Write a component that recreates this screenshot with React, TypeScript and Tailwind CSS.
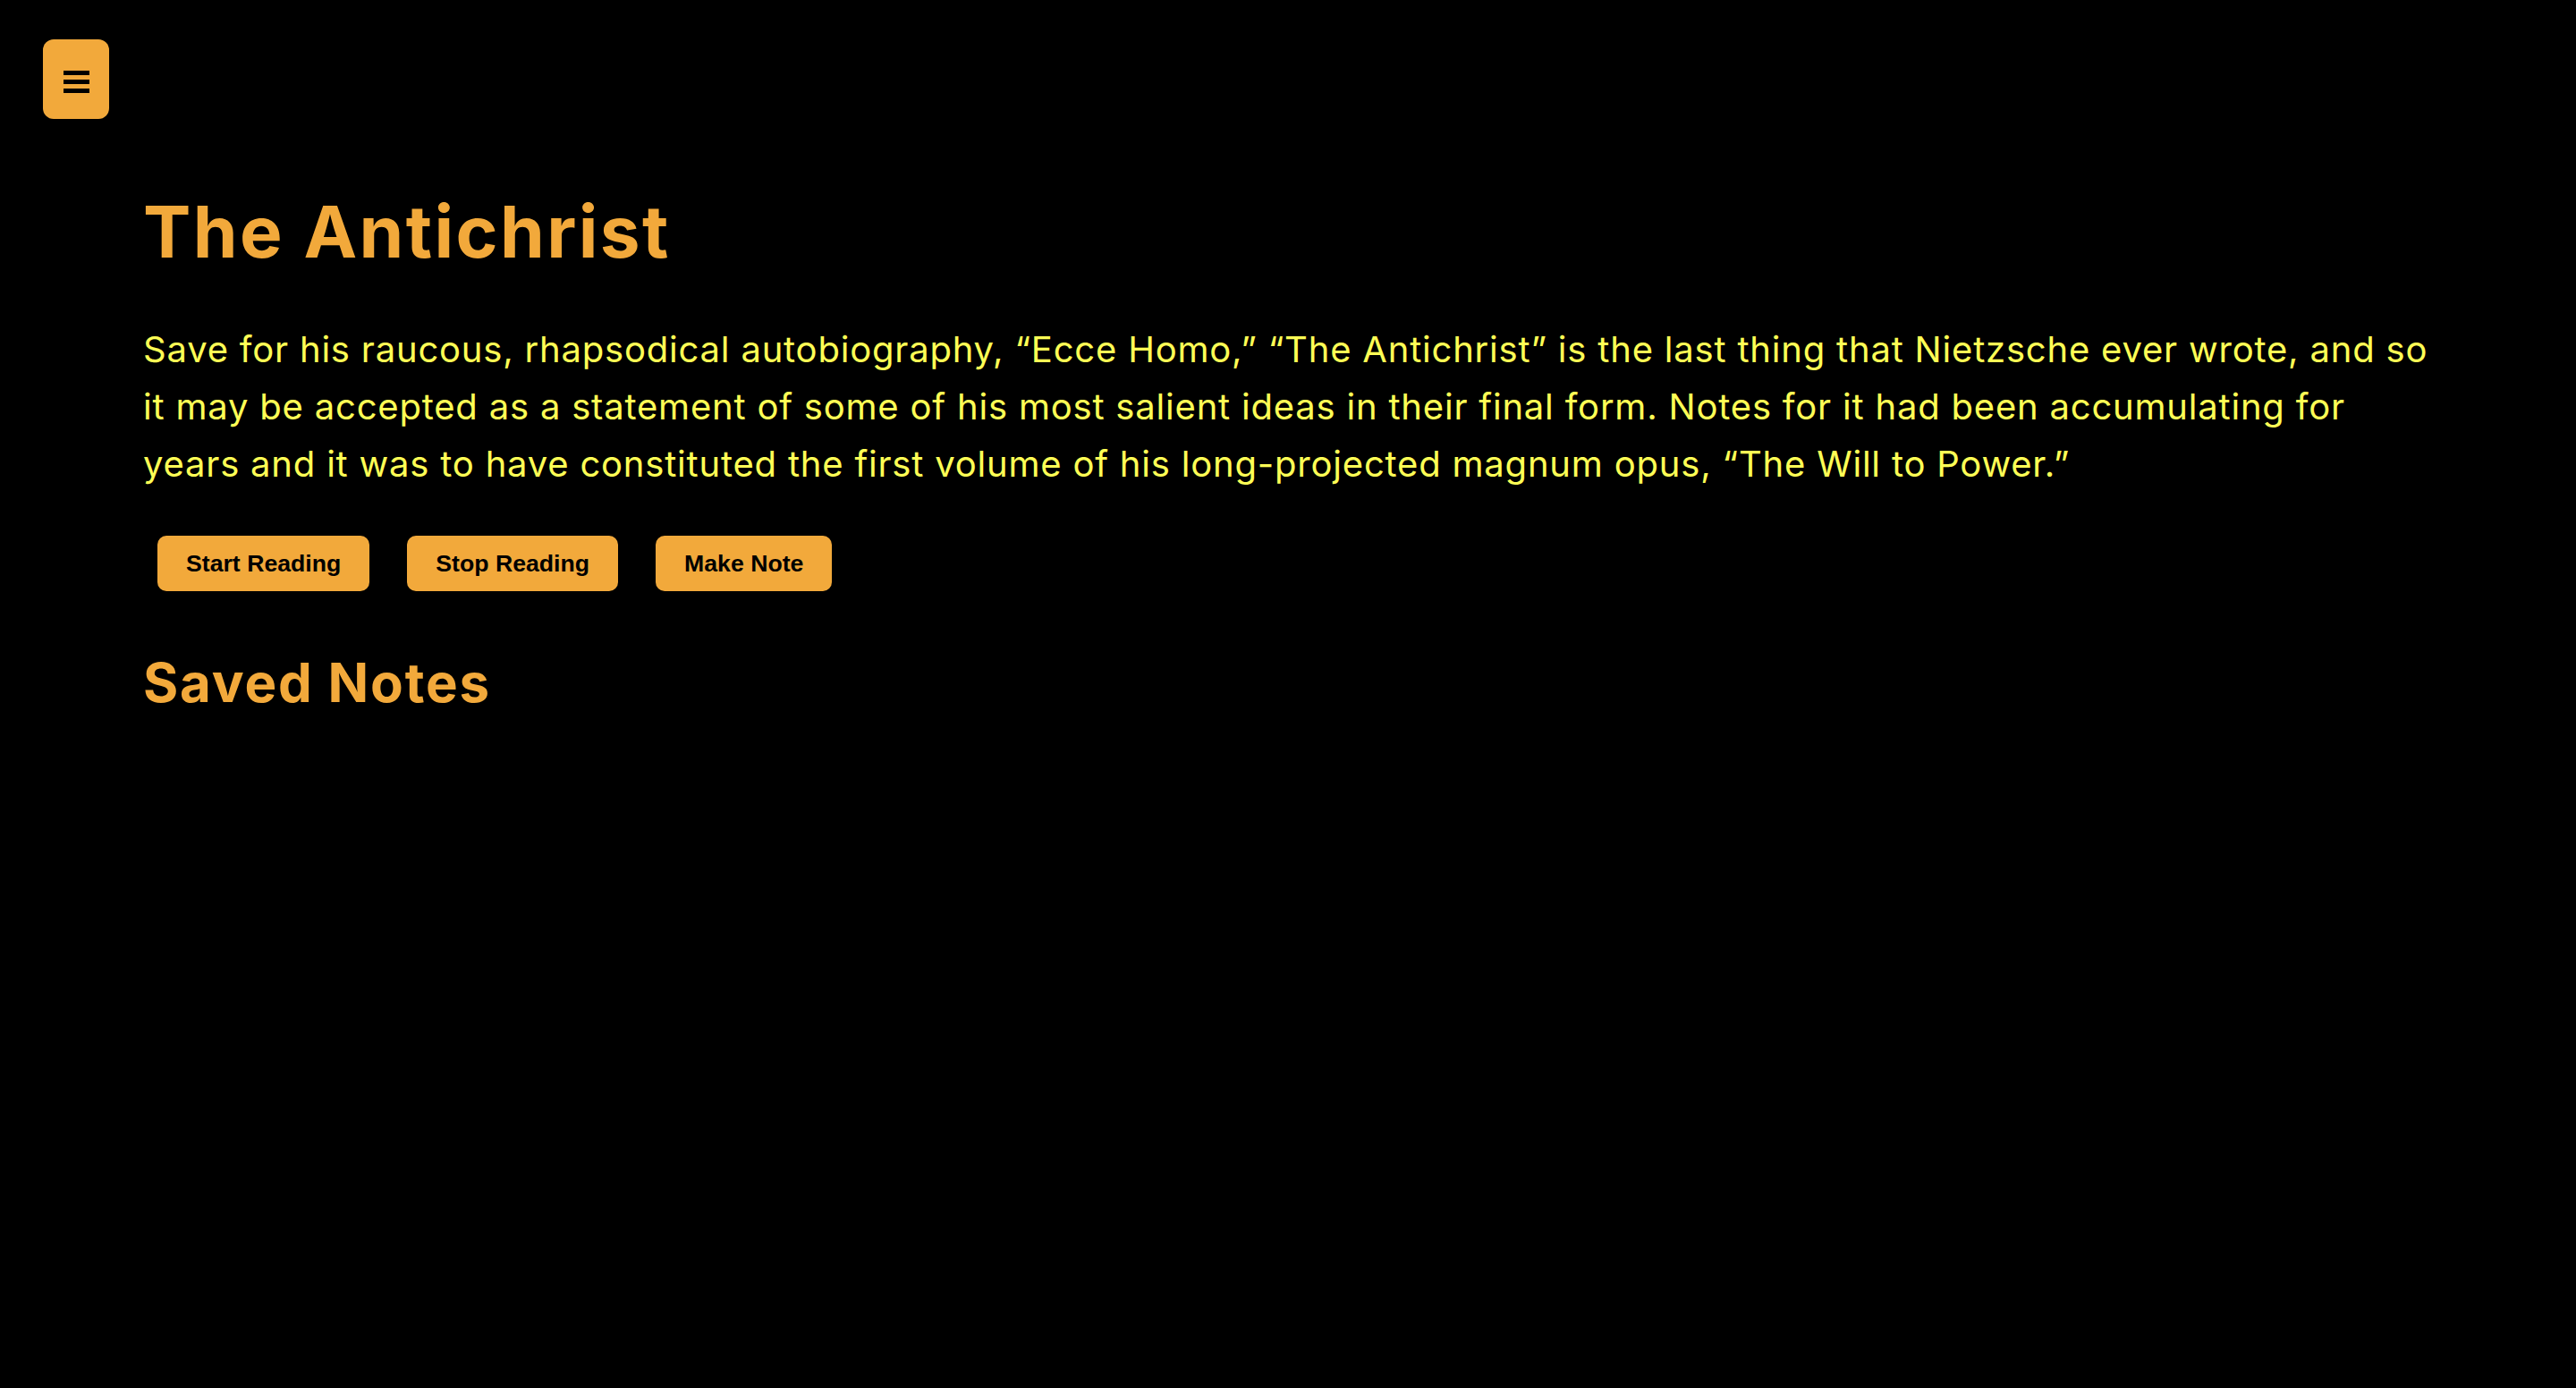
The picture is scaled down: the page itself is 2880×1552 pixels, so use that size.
const paragraph =
  "Save for his raucous, rhapsodical autobiography, “Ecce Homo,” “The Antichrist” is the last thing that Nietzsche ever wrote, and so it may be accepted as a statement of some of his most salient ideas in their final form. Notes for it had been accumulating for years and it was to have constituted the first volume of his long-projected magnum opus, “The Will to Power.”";

const actions = ["Start Reading", "Stop Reading", "Make Note"];

function MenuIcon() {
  return (
    <svg width="29" height="25" viewBox="0 0 29 25" fill="#000">
      <rect x="0" y="0" width="29" height="5" />
      <rect x="0" y="10" width="29" height="5" />
      <rect x="0" y="20" width="29" height="5" />
    </svg>
  );
}

export default function App() {
  return (
    <div className="flow-root min-h-screen bg-black pt-[44px] font-['Inter',sans-serif]">
      <button className="ml-[48px] flex h-[89px] w-[74px] items-center justify-center rounded-[12px] bg-[#f2a93b] pt-[6px]">
        <MenuIcon />
      </button>

      <main className="pl-[160px] pr-[140px]">
        <h1 className="mt-[86px] text-[80px] font-bold leading-[80px] tracking-[0.03em] text-[#f2a93b]">
          The Antichrist
        </h1>
        <p className="mt-[60px] text-[40px] leading-[64px] tracking-[0.02em] text-[#ffff55]">
          {paragraph}
        </p>

        <div className="ml-[16px] mt-[48px] flex gap-[42px]">
          {actions.map((label) => (
            <button
              key={label}
              className="flex h-[62px] items-center rounded-[10px] bg-[#f2a93b] px-[32px] font-['Liberation_Sans',Arial,sans-serif] text-[26.67px] font-bold text-black"
            >
              {label}
            </button>
          ))}
        </div>

        <h2 className="mt-[72px] text-[60px] font-bold leading-[60px] tracking-[0.03em] text-[#f2a93b]">
          Saved Notes
        </h2>
      </main>
    </div>
  );
}
